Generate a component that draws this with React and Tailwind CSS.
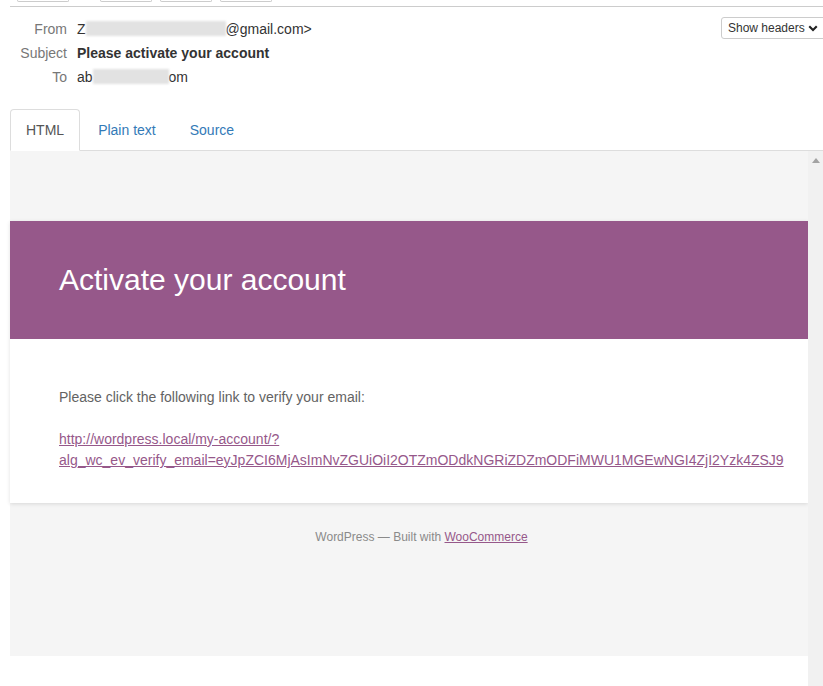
import React from 'react';

const Blur = ({ w }) => (
  <span
    className="inline-block h-[15px] bg-[#e2e2e2] blur-[1px] align-[-2px]"
    style={{ width: w }}
  />
);

const App = () => {
  return (
    <div className="relative h-[686px] w-[823px] overflow-hidden bg-white font-['Liberation_Sans',Arial,sans-serif] text-[14px] text-[#333]">
      <div className="pl-[10px]">
        {/* toolbar remnant */}
        <div className="flex h-[6px] items-start">
          <div className="ml-[7px] h-[2px] w-[52px] rounded-b-[2px] border-x border-b border-[#ccc]" />
          <div className="ml-[31px] h-[2px] w-[52px] rounded-b-[2px] border-x border-b border-[#ccc]" />
          <div className="ml-[8px] h-[2px] w-[52px] rounded-b-[2px] border-x border-b border-[#ccc]" />
          <div className="ml-[8px] h-[2px] w-[52px] rounded-b-[2px] border-x border-b border-[#ccc]" />
        </div>
        <div className="border-t border-[#ccc]" />

        {/* headers */}
        <div className="mt-[10px] flex items-start justify-between">
          <div className="grid grid-cols-[57px_1fr] gap-x-[10px] leading-[24px]">
            <div className="text-right text-[#777]">From</div>
            <div>
              Z<Blur w={140} />@gmail.com&gt;
            </div>
            <div className="text-right text-[#777]">Subject</div>
            <div className="font-bold">Please activate your account</div>
            <div className="text-right text-[#777]">To</div>
            <div>
              ab<Blur w={76} />om
            </div>
          </div>
          <button className="mr-[-8px] flex h-[22px] w-[110px] items-center gap-[3px] rounded-[3px] border border-[#ccc] bg-white pl-[6px] text-[12px] leading-[18px] text-[#333]">
            Show headers
            <svg width="10" height="8" viewBox="0 0 10 8" className="mt-[1px]">
              <path d="M0.5 2 L2 0.5 L5 3.5 L8 0.5 L9.5 2 L5 6.5 Z" fill="#222" />
            </svg>
          </button>
        </div>

        {/* tabs */}
        <div className="mt-[20px] flex border-b border-[#ddd]">
          <div className="-mb-px mr-[2px] rounded-t-[4px] border border-[#ddd] border-b-white bg-white px-[15px] py-[10px] leading-[20px] text-[#555]">
            HTML
          </div>
          <div className="-mb-px mr-[2px] border border-transparent px-[15px] py-[10px] leading-[20px] text-[#337ab7]">
            Plain text
          </div>
          <div className="-mb-px mr-[2px] border border-transparent px-[15px] py-[10px] leading-[20px] text-[#337ab7]">
            Source
          </div>
        </div>

        {/* email frame */}
        <div className="flex items-start">
          <div className="h-[505px] w-[798px] bg-[#f5f5f5] pt-[70px]">
            <div className="shadow-[0_1px_4px_rgba(0,0,0,0.12)]">
              <div className="bg-[#96588a] px-[49px] py-[36px] text-[30px] leading-[46px] text-white">
                Activate your account
              </div>
              <div className="bg-white px-[49px] pb-[32px] pt-[48px] leading-[21px] text-[#636363]">
                <p className="mb-[21px]">Please click the following link to verify your email:</p>
                <a href="#" className="block text-[#96588a] underline">
                  <span className="block">http://wordpress.local/my-account/?</span>
                  <span className="block whitespace-nowrap">
                    alg_wc_ev_verify_email=eyJpZCI6MjAsImNvZGUiOiI2OTZmODdkNGRiZDZmODFiMWU1MGEwNGI4ZjI2Yzk4ZSJ9
                  </span>
                </a>
              </div>
            </div>
            <div className="pl-[25px] pt-[25px] text-center text-[12px] leading-[18px] text-[#8a8a8a]">
              WordPress — Built with{' '}
              <a href="#" className="text-[#96588a] underline">
                WooCommerce
              </a>
            </div>
          </div>
          <div className="flex h-[540px] w-[15px] justify-center bg-[#f1f1f1] pt-[7px]">
            <svg width="8" height="5" viewBox="0 0 8 5">
              <path d="M0 5 L4 0 L8 5 Z" fill="#a3a3a3" />
            </svg>
          </div>
        </div>
      </div>
    </div>
  );
};

export default App;
